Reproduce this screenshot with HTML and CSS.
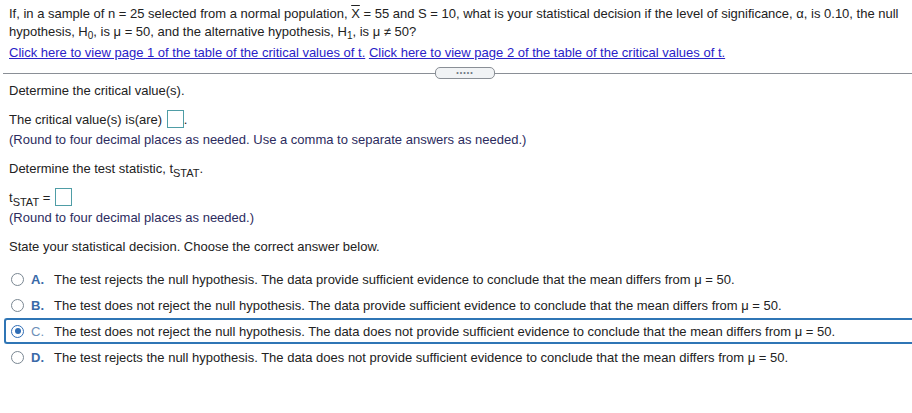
FILE: index.html
```html
<!DOCTYPE html>
<html>
<head>
<meta charset="utf-8">
<link rel="stylesheet" href="styles.css">
</head>
<body>
<div class="page">
  <div class="question">
    <p class="q">If, in a sample of n = 25 selected from a normal population, <span class="xbar">X</span> = 55 and S = 10, what is your statistical decision if the level of significance, α, is 0.10, the null hypothesis, H<sub>0</sub>, is μ = 50, and the alternative hypothesis, H<sub>1</sub>, is μ ≠ 50?</p>
    <p class="links"><a href="#">Click here to view page 1 of the table of the critical values of t.</a> <a href="#">Click here to view page 2 of the table of the critical values of t.</a></p>
  </div>
  <div class="divider">
    <span class="rule"></span>
    <span class="pill">•••••</span>
    <span class="rule"></span>
  </div>
  <div class="answer">
    <p class="step">Determine the critical value(s).</p>
    <p class="line">The critical value(s) is(are) <span class="box"></span>.</p>
    <p class="hint">(Round to four decimal places as needed. Use a comma to separate answers as needed.)</p>
    <p class="step">Determine the test statistic, t<sub class="stat">STAT</sub>.</p>
    <p class="line tline">t<sub class="stat">STAT</sub> = <span class="box"></span></p>
    <p class="hint">(Round to four decimal places as needed.)</p>
    <p class="step">State your statistical decision. Choose the correct answer below.</p>
    <ul class="options">
      <li class="opt"><span class="radio"></span><span class="letter">A.</span><span class="otext">The test rejects the null hypothesis. The data provide sufficient evidence to conclude that the mean differs from μ = 50.</span></li>
      <li class="opt"><span class="radio"></span><span class="letter">B.</span><span class="otext">The test does not reject the null hypothesis. The data provide sufficient evidence to conclude that the mean differs from μ = 50.</span></li>
      <li class="opt selected"><span class="radio on"></span><span class="letter">C.</span><span class="otext">The test does not reject the null hypothesis. The data does not provide sufficient evidence to conclude that the mean differs from μ = 50.</span></li>
      <li class="opt"><span class="radio"></span><span class="letter">D.</span><span class="otext">The test rejects the null hypothesis. The data does not provide sufficient evidence to conclude that the mean differs from μ = 50.</span></li>
    </ul>
  </div>
</div>
</body>
</html>
```
FILE: styles.css
```css
html, body {
  margin: 0;
  padding: 0;
  background: #fff;
}
body {
  font-family: "Liberation Sans", Arial, sans-serif;
  font-size: 13px;
  color: #222;
  overflow: hidden;
}
p { margin: 0; }
.question {
  padding: 5px 9px 0 9px;
}
.q {
  line-height: 18px;
}
sub {
  font-size: 10px;
  line-height: 0;
  vertical-align: -3px;
}
.xbar {
  text-decoration: overline;
}
.links {
  margin-top: 3px;
  line-height: 18px;
}
.links a {
  color: #2a22c8;
  text-decoration: underline;
}
.divider {
  display: flex;
  align-items: center;
  margin-top: 5px;
  padding-left: 3px;
  margin-right: -15px;
}
.rule {
  flex: 1;
  height: 1px;
  background: #8a8f96;
}
.pill {
  width: 58px;
  height: 10px;
  border: 1px solid #8a8f96;
  border-radius: 5px;
  background: #f1f3f5;
  font-size: 7px;
  line-height: 10px;
  letter-spacing: 1px;
  text-align: center;
  color: #6d7580;
}
.answer {
  padding: 3px 9px 0 9px;
}
.step {
  line-height: 18px;
  margin-bottom: 10px;
}
.line {
  line-height: 20px;
  white-space: pre;
}
.tline { margin-top: 6px; }
.box {
  display: inline-block;
  vertical-align: middle;
  border: 1px solid #4f9da6;
  background: #fff;
  margin-left: 1px;
  box-sizing: border-box;
  width: 17px;
  height: 18px;
  margin-top: -3px;
}
.stat {
  font-size: 11px;
  vertical-align: -4px;
}
.hint {
  color: #2c2c5e;
  line-height: 16px;
  margin-top: 2px;
  margin-bottom: 12px;
}
.options {
  list-style: none;
  margin: 0;
  padding: 0;
  margin-top: 9px;
}
.opt {
  display: flex;
  align-items: center;
  box-sizing: border-box;
  height: 26px;
  margin-left: -5px;
  padding-left: 5px;
  border: 2px solid transparent;
  border-right: none;
  border-radius: 3px 0 0 3px;
  margin-right: -12px;
}
.opt.selected {
  border-color: #2f75b5;
}
.radio {
  border: 1px solid #7a8792;
  border-radius: 50%;
  box-sizing: border-box;
  width: 13px;
  height: 13px;
  margin-right: 7px;
  position: relative;
  flex: none;
}
.radio.on::after {
  content: "";
  position: absolute;
  left: 2.5px;
  top: 2.5px;
  width: 6px;
  height: 6px;
  border-radius: 50%;
  background: #2f6db5;
}
.radio.on {
  border-color: #2f6db5;
}
.letter {
  width: 23px;
  font-weight: bold;
  color: #3a6aa8;
  flex: none;
}
.selected .letter {
  color: #6d8fb8;
  font-weight: normal;
}
.otext {
  white-space: nowrap;
}
```
